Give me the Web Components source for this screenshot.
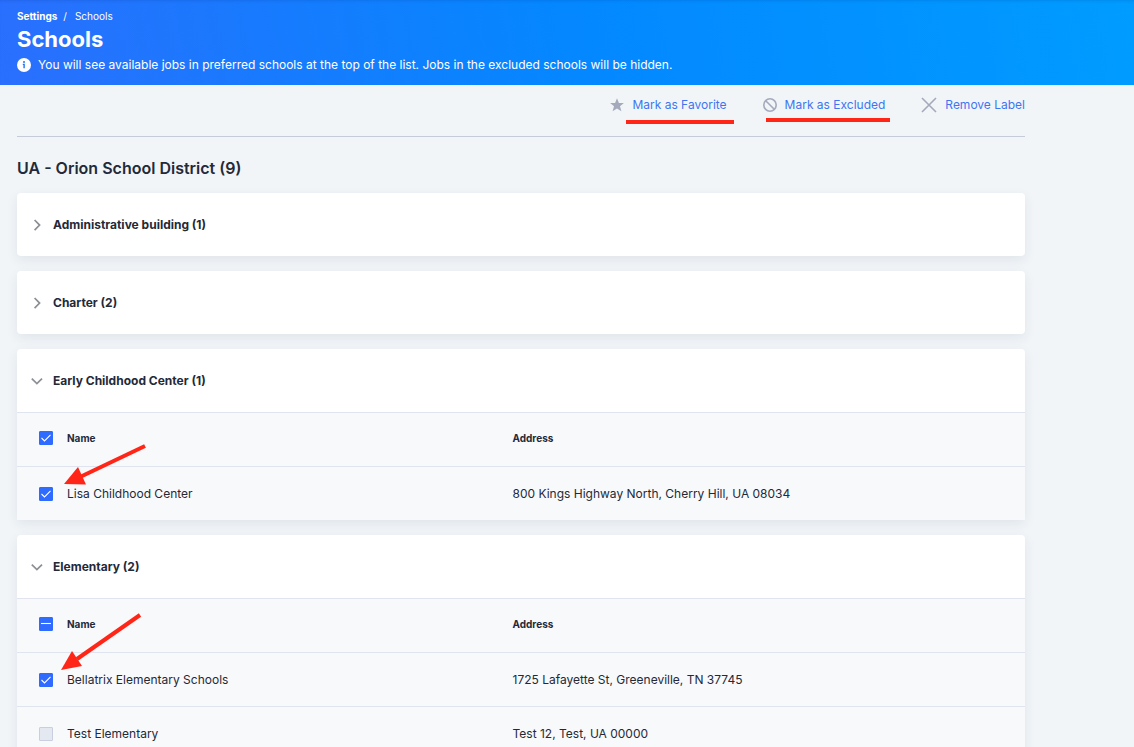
<!DOCTYPE html>
<html lang="en">
<head>
<meta charset="utf-8">
<meta name="viewport" content="width=device-width, initial-scale=1">
<title>Schools</title>
<style>
  body {
    margin: 0;
    background: #f1f5f8;
    color: #242938;
    font: 12px/16px Inter, "Liberation Sans", sans-serif;
  }
</style>
</head>
<body>
<schools-page></schools-page>

<template id="page-banner">
  <style>
    :host { display: block; padding: 10px 17px 12px; color: #fff; background: linear-gradient(80deg, #2a6ffd 0%, #0487ff 50%, #009cff 100%); box-shadow: inset 0 3px 3px -2px rgba(0, 40, 120, .15); }
    nav { display: flex; gap: 6px; font-size: 10px; line-height: 12px; }
    a { color: inherit; text-decoration: none; font-weight: 700; }
    .here { padding-left: 2px; }
    h1 { margin: 0; font-size: 22px; line-height: 35px; font-weight: 700; }
    p { display: flex; align-items: center; gap: 7px; margin: 0; }
    svg { display: block; flex: none; }
  </style>
  <nav aria-label="Breadcrumb">
    <a href="#settings">Settings</a><span>/</span><span class="here" aria-current="page"><slot name="crumb"></slot></span>
  </nav>
  <h1><slot name="title"></slot></h1>
  <p>
    <svg width="14" height="14" viewBox="0 0 14 14" aria-hidden="true"><circle cx="7" cy="7" r="7" fill="#fff"/><path d="M5.8 5.8h2v4.4H6.4V7H5.8z" fill="#1b74fd"/><circle cx="7" cy="4" r="1" fill="#1b74fd"/></svg>
    <span><slot></slot></span>
  </p>
</template>

<template id="label-action">
  <style>
    :host { display: block; position: relative; }
    button { display: flex; align-items: center; gap: 8px; height: 20px; margin: 0; padding: 0; border: 0; background: none; color: #3d75f2; font: inherit; cursor: pointer; }
    ::slotted(svg) { display: block; flex: none; }
    .mark { position: absolute; height: 4px; background: #ff2517; display: none; }
    :host([mark="favorite"]) .mark { display: block; left: 16px; right: -7px; top: 25px; }
    :host([mark="excluded"]) .mark { display: block; left: 3px; right: -5px; top: 23px; }
  </style>
  <button type="button"><slot name="icon"></slot><span><slot></slot></span></button>
  <span class="mark"></span>
</template>

<template id="school-group">
  <style>
    :host { display: block; background: #fff; border-radius: 4px; box-shadow: 0 4px 12px rgba(40, 50, 80, .08); }
    h3 { margin: 0; font: inherit; }
    button { display: flex; align-items: center; gap: 9px; width: 100%; height: 63px; margin: 0; padding: 0 13px; border: 0; background: none; color: inherit; font: inherit; font-weight: 700; text-align: left; cursor: pointer; }
    svg { display: block; flex: none; transform: rotate(-90deg); }
    :host([open]) svg { transform: none; }
    .body { display: none; }
    :host([open]) .body { display: block; }
  </style>
  <h3><button type="button">
    <svg width="14" height="14" viewBox="0 0 14 14" fill="none" stroke="#8d8f96" stroke-width="1.7" aria-hidden="true"><path d="M1.8 4.6 6.9 9.6 12 4.6"/></svg>
    <span><slot name="title"></slot></span>
  </button></h3>
  <div class="body"><slot></slot></div>
</template>

<template id="school-table">
  <style>
    :host { display: block; }
    table { width: 100%; table-layout: fixed; border-collapse: separate; border-spacing: 0; background: #f8f9fb; }
    .c-check { width: 50px; }
    .c-name { width: 44%; }
    th, td { box-sizing: border-box; height: 54px; padding: 0; border-top: 1px solid #dfe4ee; text-align: left; vertical-align: middle; font-weight: 400; }
    thead th { padding-bottom: 3px; font-size: 10px; font-weight: 700; }
    th:first-child, td:first-child { padding-left: 22px; }
    th:last-child, td:last-child { padding-left: 2px; }
    .check { position: relative; display: block; width: 14px; height: 14px; }
    input { appearance: none; display: block; box-sizing: border-box; width: 14px; height: 14px; margin: 0; border: 1px solid #c9cfde; border-radius: 1px; background: #e4e8f0; }
    input:checked, input:indeterminate { border-color: #2f6bff; background: #2f6bff; }
    svg { position: absolute; inset: 0; display: none; pointer-events: none; fill: none; stroke: #fff; stroke-width: 1.1; }
    input:checked:not(:indeterminate) ~ .tick, input:indeterminate ~ .dash { display: block; }
    .arrow { position: absolute; overflow: visible; }
    .arrow path { fill: #ff2517; stroke: none; }
    .arrow line { stroke: #ff2517; stroke-width: 4; }
    .arrow.show { display: block; }
    .low { inset: -42px auto auto 25px; }
    .steep { inset: -59px auto auto 22px; }
  </style>
  <table>
    <colgroup><col class="c-check"><col class="c-name"><col></colgroup>
    <thead></thead>
    <tbody></tbody>
  </table>
</template>

<template id="schools-page">
  <style>
    :host { display: block; }
    main { padding: 0 109px 15px 17px; }
    .toolbar { display: flex; justify-content: flex-end; gap: 36px; padding: 10px 0 21px; border-bottom: 1px solid #c5cbd8; }
    h2 { margin: 0; padding: 21px 0 15px; font-size: 16px; line-height: 20px; font-weight: 600; }
    .groups { display: grid; gap: 15px; }
  </style>
  <page-banner>
    <span slot="crumb">Schools</span>
    <span slot="title">Schools</span>
    You will see available jobs in preferred schools at the top of the list. Jobs in the excluded schools will be hidden.
  </page-banner>
  <main>
    <div class="toolbar">
      <label-action mark="favorite">
        <svg slot="icon" width="14" height="14" viewBox="0 0 14 14" aria-hidden="true"><path fill="#a4aabb" d="M7 .3 8.9 5h5L10 8.2l1.4 5L7 10.4l-4.400 2.800L4 8.200.1 5h5z"/></svg>
        Mark as Favorite
      </label-action>
      <label-action mark="excluded">
        <svg slot="icon" width="14" height="14" viewBox="0 0 14 14" fill="none" stroke="#a4aabb" stroke-width="1.600" aria-hidden="true"><circle cx="7" cy="7" r="6.200"/><path d="m2.700 2.700 8.600 8.600"/></svg>
        Mark as Excluded
      </label-action>
      <label-action>
        <svg slot="icon" width="16" height="16" viewBox="0 0 16 16" fill="none" stroke="#a4aabb" stroke-width="1.600" aria-hidden="true"><path d="m1 1 14 14M15 1 1 15"/></svg>
        Remove Label
      </label-action>
    </div>
    <h2>UA - Orion School District (9)</h2>
    <div class="groups">
      <school-group><span slot="title">Administrative building (1)</span></school-group>
      <school-group><span slot="title">Charter (2)</span></school-group>
      <school-group open><span slot="title">Early Childhood Center (1)</span><school-table data-set="early"></school-table></school-group>
      <school-group open><span slot="title">Elementary (2)</span><school-table data-set="elementary"></school-table></school-group>
    </div>
  </main>
</template>

<script>
  class TemplateElement extends HTMLElement {
    constructor() {
      super();
      this.attachShadow({ mode: "open" })
        .append(document.getElementById(this.localName).content.cloneNode(true));
    }
  }

  class PageBanner extends TemplateElement {}
  class LabelAction extends TemplateElement {}

  class SchoolGroup extends TemplateElement {
    connectedCallback() {
      const button = this.shadowRoot.querySelector("button");
      const sync = () => button.setAttribute("aria-expanded", String(this.hasAttribute("open")));
      button.onclick = () => { this.toggleAttribute("open"); sync(); };
      sync();
    }
  }

  const SCHOOLS = {
    early: [
      { name: "Lisa Childhood Center", address: "800 Kings Highway North, Cherry Hill, UA 08034", checked: true, arrow: "low" }
    ],
    elementary: [
      { name: "Bellatrix Elementary Schools", address: "1725 Lafayette St, Greeneville, TN 37745", checked: true, arrow: "steep" },
      { name: "Test Elementary", address: "Test 12, Test, UA 00000", checked: false }
    ]
  };

  const ARROWS = {
    low: '<svg class="arrow show low" width="82" height="40" viewBox="0 0 82 40" aria-hidden="true"><line x1="81" y1="1" x2="16" y2="32"/><path d="M0 39 14 22 22 39.500z"/></svg>',
    steep: '<svg class="arrow show steep" width="80" height="56" viewBox="0 0 80 56" aria-hidden="true"><line x1="79" y1="1" x2="16" y2="45"/><path d="M0 56 11 37 21 52z"/></svg>'
  };

  const checkbox = (id, checked, arrow = "") => `
    <span class="check"><input type="checkbox" id="${id}"${checked ? " checked" : ""}>
      <svg class="tick" width="14" height="14" viewBox="0 0 14 14" aria-hidden="true"><path d="m2.500 7 3 3 6-6.200"/></svg>
      <svg class="dash" width="14" height="14" viewBox="0 0 14 14" aria-hidden="true"><path d="M2 6.500h10"/></svg>${arrow}</span>`;

  class SchoolTable extends TemplateElement {
    connectedCallback() {
      const rows = SCHOOLS[this.dataset.set];
      const root = this.shadowRoot;
      root.querySelector("thead").innerHTML =
        `<tr><th>${checkbox("all", false)}</th><th scope="col"><label for="all">Name</label></th><th scope="col">Address</th></tr>`;
      root.querySelector("tbody").innerHTML = rows.map((r, i) =>
        `<tr><td>${checkbox("row" + i, r.checked, ARROWS[r.arrow])}</td><td><label for="row${i}">${r.name}</label></td><td>${r.address}</td></tr>`).join("");
      const all = root.getElementById("all");
      const items = [...root.querySelectorAll("tbody input")];
      const sync = () => {
        const count = items.filter(i => i.checked).length;
        all.checked = count === items.length;
        all.indeterminate = count > 0 && count < items.length;
      };
      items.forEach(i => i.onchange = sync);
      all.onchange = () => { items.forEach(i => i.checked = all.checked); sync(); };
      sync();
    }
  }

  class SchoolsPage extends TemplateElement {}

  customElements.define("page-banner", PageBanner);
  customElements.define("label-action", LabelAction);
  customElements.define("school-group", SchoolGroup);
  customElements.define("school-table", SchoolTable);
  customElements.define("schools-page", SchoolsPage);
</script>
</body>
</html>
